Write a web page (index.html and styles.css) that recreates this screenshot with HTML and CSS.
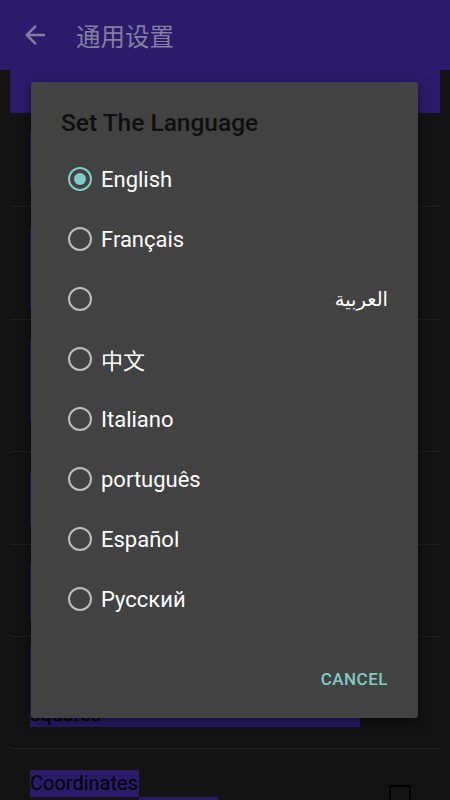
FILE: index.html
```html
<!DOCTYPE html>
<html>
<head>
<meta charset="utf-8">
<link rel="stylesheet" href="styles.css">
</head>
<body>
<div class="screen">
  <header class="appbar">
    <svg class="back" viewBox="0 0 24 24" width="30" height="30"><path d="M20 11H7.83l5.59-5.59L12 4l-8 8 8 8 1.41-1.41L7.83 13H20v-2z" fill="#857ea0"/></svg>
    <div class="appbar-title">通用设置</div>
  </header>
  <main class="settings">
    <div class="category"></div>
    <div class="row r1"><span class="hl w1"></span><span class="hl w2"></span></div>
    <div class="row r2"><span class="hl w3"></span><span class="hl w4"></span><span class="hl w2"></span></div>
    <div class="row r3"><span class="hl w1"></span><span class="hl w4"></span><span class="hl w3"></span></div>
    <div class="row r4"><span class="hl w2"></span><span class="hl w1"></span></div>
    <div class="row r5"><span class="hl w3"></span><span class="hl w2"></span></div>
    <div class="row r6"><span class="hl w1"></span><span class="hl w4"></span><span class="hl sq">squares</span></div>
    <div class="row r7"><span class="coord"><span class="hl t">Coordinates</span><span class="hl s2"></span></span><span class="check"></span></div>
  </main>
  <div class="dialog">
    <h2 class="dlg-title">Set The Language</h2>
    <ul class="options">
      <li class="opt"><span class="radio on"></span><span class="label">English</span></li>
      <li class="opt"><span class="radio"></span><span class="label">Français</span></li>
      <li class="opt"><span class="radio"></span><span class="label ar" dir="rtl">العربية</span></li>
      <li class="opt"><span class="radio"></span><span class="label cjk">中文</span></li>
      <li class="opt"><span class="radio"></span><span class="label">Italiano</span></li>
      <li class="opt"><span class="radio"></span><span class="label">português</span></li>
      <li class="opt"><span class="radio"></span><span class="label">Español</span></li>
      <li class="opt"><span class="radio"></span><span class="label">Русский</span></li>
    </ul>
    <div class="actions"><span class="btn">CANCEL</span></div>
  </div>
</div>
</body>
</html>
```
FILE: styles.css
```css
* { box-sizing: border-box; }
html, body { margin: 0; padding: 0; }
body {
  background: #131313;
  font-family: Roboto, "Noto Sans", "Noto Sans CJK SC", sans-serif;
  width: 450px;
  height: 800px;
  overflow: hidden;
}
.screen { position: relative; width: 450px; height: 800px; overflow: hidden; }
.appbar {
  height: 70px;
  background: #2a1c6b;
  display: flex;
  align-items: center;
  padding-left: 20px;
}
.back { display: block; }
.appbar-title {
  margin-left: 26px;
  font-family: "Noto Sans CJK SC", sans-serif;
  font-size: 24.5px;
  color: #857ea0;
}
.settings { padding: 0 10px; }
.category { height: 43px; background: #2a1c6b; }
.row {
  border-bottom: 1px solid #1f1f1f;
  padding: 20px 20px 0;
  display: flex;
  flex-direction: column;
  align-items: flex-start;
  font-size: 20px;
  color: #000;
}
.hl { display: block; background: #2a1c6b; height: 27px; line-height: 27px; }
.w1 { width: 140px; }
.w2 { width: 220px; }
.w3 { width: 110px; }
.w4 { width: 300px; }
.sq { width: 330px; padding-top: 1px; }
.r1 { height: 94px; }
.r2 { height: 113px; }
.r3 { height: 132px; }
.r4 { height: 93px; }
.r5 { height: 92px; }
.r6 { height: 112px; padding-top: 9px; }
.row.r7 {
  border-bottom: none;
  flex-direction: row;
  justify-content: space-between;
  align-items: flex-start;
  padding-top: 21px;
}
.coord { display: flex; flex-direction: column; align-items: flex-start; }
.t { width: 109px; white-space: nowrap; }
.s2 { width: 79px; margin-left: 109px; }
.check {
  width: 22px; height: 22px;
  border: 2px solid #000;
  border-radius: 2px;
  margin-top: 15px;
  margin-right: 9px;
}
.dialog {
  position: absolute;
  left: 31px;
  top: 82px;
  width: 387px;
  height: 636px;
  background: #424242;
  border-radius: 3px;
  box-shadow: 0 4px 12px rgba(0,0,0,0.5);
  padding: 24px 30px 0 30px;
  display: flex;
  flex-direction: column;
}
.dlg-title {
  margin: 0;
  font-size: 24.5px;
  font-weight: 500;
  line-height: 34px;
  color: #0f0f0f;
}
.options { list-style: none; margin: 9px 0 0; padding: 0; }
.opt {
  height: 60px;
  display: flex;
  align-items: center;
  padding-left: 7px;
}
.radio {
  width: 24px; height: 24px;
  border-radius: 50%;
  border: 2px solid #bdbdbd;
  flex: none;
  display: flex;
  align-items: center;
  justify-content: center;
}
.radio.on { border-color: #80cbc4; }
.radio.on::after {
  content: "";
  width: 12px; height: 12px;
  border-radius: 50%;
  background: #80cbc4;
}
.label {
  flex: 1;
  margin-left: 9px;
  font-size: 22px;
  color: #ffffff;
}
.ar { font-family: "DejaVu Sans", "Noto Sans", sans-serif; font-size: 19.5px; }
.cjk { font-family: "Noto Sans CJK SC", sans-serif; }
.actions {
  display: flex;
  justify-content: flex-end;
  padding-top: 38px;
}
.btn {
  font-size: 17px;
  font-weight: 500;
  letter-spacing: 0.5px;
  color: #80cbc4;
  line-height: 24px;
}
```
